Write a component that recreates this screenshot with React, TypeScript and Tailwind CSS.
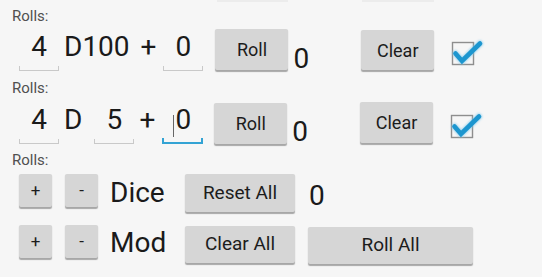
import React from "react";

const btn =
  "flex items-center justify-center bg-[#d6d6d6] rounded-[2px] shadow-[0_1.5px_1px_rgba(0,0,0,0.32)] text-[#1c1c1c]";

function Field({
  value,
  w = "w-[40px]",
  ml,
  focused = false,
}: {
  value: string;
  w?: string;
  ml: string;
  focused?: boolean;
}) {
  return (
    <div className={`relative h-[43px] ${w} ${ml} shrink-0`}>
      <div className="flex justify-center text-[28px] leading-[36px] text-[#1a1a1a]">
        {focused && <span className="mt-[13px] mr-[1px] h-[22px] w-[1px] bg-[#666]" />}
        <span>{value}</span>
      </div>
      {focused ? (
        <div className="absolute left-[1px] right-0 bottom-[1px] h-[6px] border-x-2 border-b-2 border-[#33a3d4]" />
      ) : (
        <div className="absolute left-0 right-0 bottom-[1px] h-[5px] border-x border-b border-[#c9c9c9]" />
      )}
    </div>
  );
}

function Check({ ml }: { ml: string }) {
  return (
    <svg width="34" height="30" viewBox="0 0 34 30" className={`${ml} mt-[9px] shrink-0 overflow-visible`}>
      <defs>
        <filter id="glow" x="-30%" y="-30%" width="160%" height="160%">
          <feGaussianBlur stdDeviation="1.2" />
        </filter>
      </defs>
      <rect x="2.5" y="4.5" width="21" height="22" fill="none" stroke="#8e8e8e" strokeWidth="1.4" />
      <path d="M5.5 15.5 L12 23 L30 5.5" fill="none" stroke="#7cc8ec" strokeWidth="6" strokeLinecap="round" strokeLinejoin="round" filter="url(#glow)" opacity="0.7" />
      <path d="M5.5 15.5 L12 23 L30 5.5" fill="none" stroke="#1d96cf" strokeWidth="4.6" strokeLinecap="round" strokeLinejoin="miter" />
    </svg>
  );
}

function Label() {
  return <div className="h-[16px] pl-[12px] text-[15px] leading-[16px] text-[#505050]">Rolls:</div>;
}

export default function App() {
  return (
    <div
      className="w-[542px] h-[277px] bg-[#f6f6f6] overflow-hidden flex flex-col"
      style={{ fontFamily: "Roboto, 'Noto Sans', sans-serif" }}
    >
      <div className="flex h-[2px]">
        <div className="ml-[217px] w-[71px] bg-[#ececec]" />
        <div className="ml-[74px] w-[72px] bg-[#ececec]" />
      </div>

      <div className="mt-[6px]">
        <Label />
      </div>

      {/* Row 1 */}
      <div className="mt-[5px] h-[43px] flex items-start">
        <Field value="4" ml="ml-[19px]" />
        <div className="ml-[5px] text-[28px] leading-[36px] text-[#1a1a1a]">D100</div>
        <div className="ml-[11px] text-[28px] leading-[36px] text-[#1a1a1a]">+</div>
        <Field value="0" ml="ml-[7px]" />
        <button className={`${btn} ml-[12px] w-[73px] h-[41px] text-[18px]`}>Roll</button>
        <div className="ml-[5px] mt-[12px] text-[28px] leading-[36px] text-[#1a1a1a]">0</div>
        <button className={`${btn} ml-[52px] mt-[1px] w-[73px] h-[40px] text-[18px]`}>Clear</button>
        <Check ml="ml-[16px]" />
      </div>

      <div className="mt-[8px]">
        <Label />
      </div>

      {/* Row 2 */}
      <div className="mt-[6px] h-[43px] flex items-start">
        <Field value="4" ml="ml-[19px]" />
        <div className="ml-[5px] text-[28px] leading-[36px] text-[#1a1a1a]">D</div>
        <Field value="5" ml="ml-[12px]" />
        <div className="ml-[5px] text-[28px] leading-[36px] text-[#1a1a1a]">+</div>
        <Field value="0" ml="ml-[6px]" w="w-[42px]" focused />
        <button className={`${btn} ml-[11px] mt-[1px] w-[73px] h-[41px] text-[18px]`}>Roll</button>
        <div className="ml-[5px] mt-[12px] text-[28px] leading-[36px] text-[#1a1a1a]">0</div>
        <button className={`${btn} ml-[52px] w-[73px] h-[41px] text-[18px]`}>Clear</button>
        <Check ml="ml-[16px]" />
      </div>

      <div className="mt-[7px]">
        <Label />
      </div>

      {/* Row 3 */}
      <div className="mt-[6px] h-[39px] flex items-start">
        <button className={`${btn} ml-[19px] w-[33px] h-[33px] text-[17px]`}>+</button>
        <button className={`${btn} ml-[13px] w-[33px] h-[33px] text-[17px]`}>-</button>
        <div className="ml-[12px] w-[75px] mt-[1px] text-[28px] leading-[36px] text-[#1a1a1a]">Dice</div>
        <button className={`${btn} w-[110px] h-[38px] text-[19px]`}>Reset All</button>
        <div className="ml-[14px] mt-[4px] text-[28px] leading-[36px] text-[#1a1a1a]">0</div>
      </div>

      {/* Row 4 */}
      <div className="mt-[12px] h-[40px] flex items-start">
        <button className={`${btn} ml-[19px] w-[33px] h-[33px] text-[17px]`}>+</button>
        <button className={`${btn} ml-[13px] w-[33px] h-[33px] text-[17px]`}>-</button>
        <div className="ml-[12px] w-[75px] text-[28px] leading-[36px] text-[#1a1a1a]">Mod</div>
        <button className={`${btn} mt-[1px] w-[110px] h-[37px] text-[19px]`}>Clear All</button>
        <button className={`${btn} ml-[13px] mt-[2px] w-[165px] h-[37px] text-[19px]`}>Roll All</button>
      </div>
    </div>
  );
}
